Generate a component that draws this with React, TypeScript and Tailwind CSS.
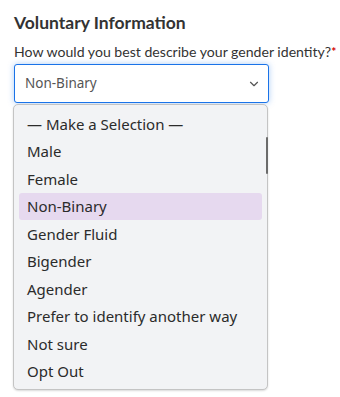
import { ChevronDown } from 'lucide-react';

const options = [
  '— Make a Selection —',
  'Male',
  'Female',
  'Non-Binary',
  'Gender Fluid',
  'Bigender',
  'Agender',
  'Prefer to identify another way',
  'Not sure',
  'Opt Out',
];

export default function App() {
  const selected = 'Non-Binary';

  return (
    <div className="min-h-[397px] w-[340px] bg-white pl-[14px] pt-[12px] font-['Lato',sans-serif] text-[#333]">
      {/* Section heading */}
      <h2 className="text-[17.5px] font-bold leading-[22px] text-[#333]">Voluntary Information</h2>

      {/* Field */}
      <div className="relative mt-[9px] w-[255px]">
        <label className="block whitespace-nowrap text-[14.1px] leading-[18px] text-[#333]">
          How would you best describe your gender identity?
          <span className="align-top text-[12px] font-bold text-[#d40000]">*</span>
        </label>

        <div className="mt-[3px] flex h-[39px] w-[255px] items-center justify-between rounded-[3px] border border-[#1a73e8] bg-white pl-[10px] pr-[7px] shadow-[0_0_6px_rgba(26,115,232,0.35)]">
          <span className="font-['Noto_Sans',sans-serif] text-[13.5px] text-[#555]">{selected}</span>
          <ChevronDown className="h-[14px] w-[14px] text-[#555]" strokeWidth={2} />
        </div>

        {/* Open list */}
        <div className="absolute left-[-1px] top-[61px] z-10 w-[255px] rounded-[5px] border border-[#c4c4c4] bg-[#f2f3f5] px-[5px] pb-[4px] pt-[5px] font-['Noto_Sans',sans-serif] shadow-[0_1px_2px_rgba(0,0,0,0.15)]">
          {options.map((opt) => (
            <div
              key={opt}
              className={`flex h-[27.5px] items-center rounded-[3px] px-[8px] text-[15px] text-[#2b2b2b] ${
                opt === selected ? 'bg-[#e6d9ef]' : ''
              }`}
            >
              {opt}
            </div>
          ))}
          <div className="absolute right-[-1px] top-[32px] h-[37px] w-[2px] rounded-full bg-[#6b6b6b]" />
        </div>
      </div>
    </div>
  );
}
